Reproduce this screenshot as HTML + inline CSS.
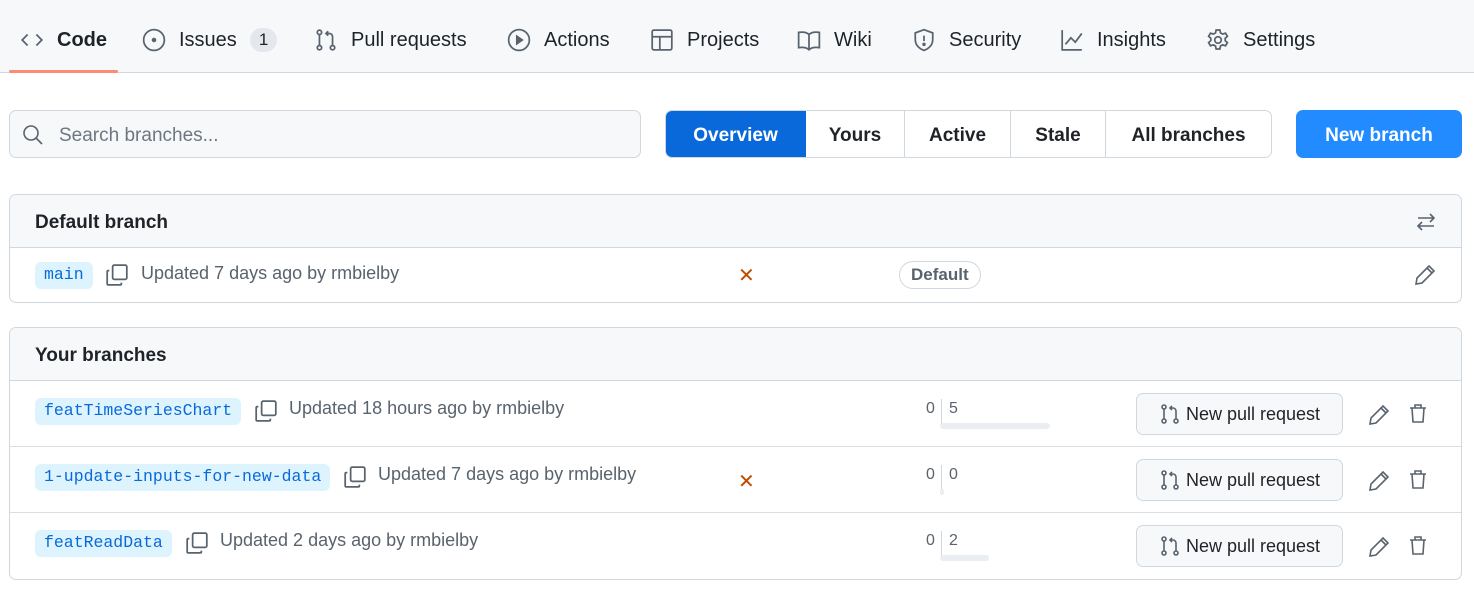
<!DOCTYPE html>
<html><head><style>
*{box-sizing:border-box;margin:0;padding:0}
body{width:1474px;height:594px;background:#fff;font-family:"Liberation Sans",sans-serif;color:#1f2328;position:relative;overflow:hidden}
.abs{position:absolute}
.nav{position:absolute;left:0;top:0;width:1474px;height:73px;background:#f6f8fa;border-bottom:1px solid #d0d7de}
.tab{position:absolute;top:27px;font-size:20px;color:#1f2328;display:flex;align-items:center;gap:13px;height:26px}
.tab svg{width:24px;height:24px;fill:none;stroke:#59636e;stroke-width:1.6}
.u{position:absolute;left:9px;top:70px;width:109px;height:3px;background:#fd8c73;border-radius:2px}
.badge{background:#e4e8ec;border-radius:14px;padding:2px 9px;font-size:17px}
.search{left:9px;top:110px;width:632px;height:48px;border:1px solid #d0d7de;border-radius:7px;background:#f6f8fa;font-size:19px;color:#6e7781;padding:14px 0 0 49px}
.seg{left:665px;top:110px;width:607px;height:48px;border:1px solid #d0d7de;border-radius:7px;display:flex;overflow:hidden;font-size:19px}
.seg div{display:flex;align-items:center;justify-content:center;border-right:1px solid #d0d7de;font-weight:bold;color:#1f2328;padding-top:4px}
.nb{left:1296px;top:110px;width:166px;height:48px;background:#218bff;border-radius:7px;color:#fff;font-size:19px;font-weight:bold;display:flex;align-items:center;justify-content:center;padding-top:4px}
.box{position:absolute;left:9px;width:1453px;border:1px solid #d0d7de;border-radius:7px;overflow:hidden}
.bh{height:53px;background:#f6f8fa;border-bottom:1px solid #d0d7de;font-size:19px;font-weight:bold;padding:17px 0 0 25px;position:relative}
.row{position:relative;height:66px;border-bottom:1px solid #d8dee4;font-size:18px;color:#59636e}
.row:last-child{border-bottom:none}
.chip{position:absolute;top:17px;background:#ddf4ff;color:#0969da;font-family:"Liberation Mono",monospace;font-size:16.5px;padding:3px 9px;border-radius:6px;height:27px}
.cp{position:absolute;top:18px;width:24px;height:24px}
.txt{position:absolute;top:17px}
.ic{stroke:#59636e;fill:none;stroke-width:1.6}
.pr{position:absolute;left:1126px;top:12px;width:207px;height:42px;border:1px solid #d0d7de;border-radius:7px;background:#f6f8fa;font-size:18px;color:#1f2328;display:flex;align-items:center;justify-content:center;gap:5px}
.num{position:absolute;top:19px;font-size:16px;color:#59636e}
.bar{position:absolute;height:6px;background:#eaeef2;border-radius:3px}
</style></head><body>
<div class="nav">
<div class="tab" style="left:20px"><svg viewBox="0 0 22 22"><path d="M7 6l-5 5 5 5M15 6l5 5-5 5"/></svg><b>Code</b></div>
<div class="tab" style="left:142px"><svg viewBox="0 0 22 22"><circle cx="11" cy="11" r="9.5"/><circle cx="11" cy="11" r="1.3" fill="#59636e"/></svg>Issues <span class="badge">1</span></div>
<div class="tab" style="left:314px"><svg viewBox="0 0 22 22"><circle cx="5" cy="4" r="2"/><circle cx="5" cy="18" r="2"/><circle cx="17" cy="18" r="2"/><path d="M5 6v10M17 16V8a3 3 0 0 0-3-3h-3M13 3l-2 2 2 2"/></svg>Pull requests</div>
<div class="tab" style="left:507px"><svg viewBox="0 0 22 22"><circle cx="11" cy="11" r="9.5"/><path d="M9 7.5l5 3.5-5 3.5z" fill="#59636e"/></svg>Actions</div>
<div class="tab" style="left:650px"><svg viewBox="0 0 22 22"><rect x="2" y="2" width="18" height="18" rx="1.5"/><path d="M2 8h18M9 8v12"/></svg>Projects</div>
<div class="tab" style="left:797px"><svg viewBox="0 0 22 22"><path d="M11 6C9 4 5 3.5 1.5 4v14c3.5-.5 7.5 0 9.5 2 2-2 6-2.5 9.5-2V4C17 3.5 13 4 11 6zM11 6v14"/></svg>Wiki</div>
<div class="tab" style="left:912px"><svg viewBox="0 0 22 22"><path d="M11 1.5l8 3v6c0 5-3.5 8.5-8 10-4.5-1.5-8-5-8-10v-6z"/><path d="M11 7v5"/><circle cx="11" cy="15" r=".8" fill="#59636e"/></svg>Security</div>
<div class="tab" style="left:1060px"><svg viewBox="0 0 22 22"><path d="M2 2v18h18M5 15l5-6 4 4 6-8"/></svg>Insights</div>
<div class="tab" style="left:1206px"><svg viewBox="0 0 22 22"><circle cx="11" cy="11" r="3"/><path d="M9.3 1.8h3.4l.6 2.7 2 1.1 2.6-.9 1.7 2.9-2 1.8v2.2l2 1.8-1.7 2.9-2.6-.9-2 1.1-.6 2.7H9.3l-.6-2.7-2-1.1-2.6.9-1.700-2.9 2-1.8V9.4l-2-1.8 1.7-2.9 2.6.9 2-1.1z"/></svg>Settings</div>
<div class="u"></div>
</div>
<div class="abs search">Search branches...</div>
<svg class="abs" style="left:22px;top:124px" width="22" height="22" viewBox="0 0 22 22"><circle cx="9" cy="9" r="7" class="ic" stroke-width="2"/><path d="M14 14l6 6" class="ic" stroke-width="2"/></svg>
<div class="abs seg"><div style="width:140px;background:#0969da;color:#fff;border-color:#0969da">Overview</div><div style="width:99px">Yours</div><div style="width:106px">Active</div><div style="width:95px">Stale</div><div style="flex:1;border:none">All branches</div></div>
<div class="abs nb">New branch</div>

<div class="box" style="top:194px;height:109px">
<div class="bh">Default branch<svg style="position:absolute;right:24px;top:16px" width="22" height="22" viewBox="0 0 22 22" class="ic"><path d="M3 7h16M15 3l4 4-4 4M19 15H3M7 11l-4 4 4 4"/></svg></div>
<div class="row" style="height:55px">
<span class="chip" style="left:25px;top:14px">main</span>
<svg class="cp" style="left:95px;top:15px" viewBox="0 0 22 22"><rect x="7" y="2" width="13" height="13" rx="1.5" class="ic"/><path d="M4 7H3a1 1 0 0 0-1 1v11a1 1 0 0 0 1 1h11a1 1 0 0 0 1-1v-1" class="ic"/></svg>
<span class="txt" style="left:131px;top:15px">Updated 7 days ago by rmbielby</span>
<span class="abs" style="left:728px;top:15px;color:#bc4c00;font-size:20px">✕</span>
<span class="abs" style="left:889px;top:13px;border:1px solid #d0d7de;border-radius:14px;padding:3px 11px;font-size:17px;font-weight:bold;color:#59636e">Default</span>
<svg class="abs" style="left:1404px;top:16px" width="22" height="22" viewBox="0 0 22 22"><path d="M15 2l5 5L8 19l-6 1 1-6z M13 4l5 5" class="ic"/></svg>
</div></div>

<div class="box" style="top:327px;height:253px">
<div class="bh">Your branches</div>
<div class="row">
<span class="chip" style="left:25px">featTimeSeriesChart</span>
<svg class="cp" style="left:244px" viewBox="0 0 22 22"><rect x="7" y="2" width="13" height="13" rx="1.5" class="ic"/><path d="M4 7H3a1 1 0 0 0-1 1v11a1 1 0 0 0 1 1h11a1 1 0 0 0 1-1v-1" class="ic"/></svg>
<span class="txt" style="left:279px">Updated 18 hours ago by rmbielby</span>
<span class="num" style="left:916px">0</span><span class="num" style="left:939px">5</span><span class="abs" style="left:931px;top:18px;width:1px;height:28px;background:#d0d7de"></span><span class="bar" style="left:930px;top:42px;width:110px"></span>
<div class="pr"><svg width="22" height="22" viewBox="0 0 22 22" class="ic"><circle cx="5" cy="4" r="2"/><circle cx="5" cy="18" r="2"/><circle cx="17" cy="18" r="2"/><path d="M5 6v10M17 16V8a3 3 0 0 0-3-3h-3M13 3l-2 2 2 2"/></svg>New pull request</div>
<svg class="abs" style="left:1358px;top:23px" width="22" height="22" viewBox="0 0 22 22"><path d="M15 2l5 5L8 19l-6 1 1-6z M13 4l5 5" class="ic"/></svg>
<svg class="abs" style="left:1397px;top:21px" width="22" height="22" viewBox="0 0 22 22"><path d="M3 6h16M8 6V3h6v3M5 6l1 14h10l1-14" class="ic"/></svg>
</div>
<div class="row">
<span class="chip" style="left:25px">1-update-inputs-for-new-data</span>
<svg class="cp" style="left:333px" viewBox="0 0 22 22"><rect x="7" y="2" width="13" height="13" rx="1.5" class="ic"/><path d="M4 7H3a1 1 0 0 0-1 1v11a1 1 0 0 0 1 1h11a1 1 0 0 0 1-1v-1" class="ic"/></svg>
<span class="txt" style="left:368px">Updated 7 days ago by rmbielby</span>
<span class="abs" style="left:728px;top:22px;color:#bc4c00;font-size:20px">✕</span>
<span class="num" style="left:916px">0</span><span class="num" style="left:939px">0</span><span class="abs" style="left:931px;top:18px;width:1px;height:28px;background:#d0d7de"></span><span class="bar" style="left:930px;top:42px;width:4px"></span>
<div class="pr"><svg width="22" height="22" viewBox="0 0 22 22" class="ic"><circle cx="5" cy="4" r="2"/><circle cx="5" cy="18" r="2"/><circle cx="17" cy="18" r="2"/><path d="M5 6v10M17 16V8a3 3 0 0 0-3-3h-3M13 3l-2 2 2 2"/></svg>New pull request</div>
<svg class="abs" style="left:1358px;top:23px" width="22" height="22" viewBox="0 0 22 22"><path d="M15 2l5 5L8 19l-6 1 1-6z M13 4l5 5" class="ic"/></svg>
<svg class="abs" style="left:1397px;top:21px" width="22" height="22" viewBox="0 0 22 22"><path d="M3 6h16M8 6V3h6v3M5 6l1 14h10l1-14" class="ic"/></svg>
</div>
<div class="row">
<span class="chip" style="left:25px">featReadData</span>
<svg class="cp" style="left:175px" viewBox="0 0 22 22"><rect x="7" y="2" width="13" height="13" rx="1.5" class="ic"/><path d="M4 7H3a1 1 0 0 0-1 1v11a1 1 0 0 0 1 1h11a1 1 0 0 0 1-1v-1" class="ic"/></svg>
<span class="txt" style="left:210px">Updated 2 days ago by rmbielby</span>
<span class="num" style="left:916px">0</span><span class="num" style="left:939px">2</span><span class="abs" style="left:931px;top:18px;width:1px;height:28px;background:#d0d7de"></span><span class="bar" style="left:930px;top:42px;width:49px"></span>
<div class="pr"><svg width="22" height="22" viewBox="0 0 22 22" class="ic"><circle cx="5" cy="4" r="2"/><circle cx="5" cy="18" r="2"/><circle cx="17" cy="18" r="2"/><path d="M5 6v10M17 16V8a3 3 0 0 0-3-3h-3M13 3l-2 2 2 2"/></svg>New pull request</div>
<svg class="abs" style="left:1358px;top:23px" width="22" height="22" viewBox="0 0 22 22"><path d="M15 2l5 5L8 19l-6 1 1-6z M13 4l5 5" class="ic"/></svg>
<svg class="abs" style="left:1397px;top:21px" width="22" height="22" viewBox="0 0 22 22"><path d="M3 6h16M8 6V3h6v3M5 6l1 14h10l1-14" class="ic"/></svg>
</div>
</div>
</body></html>
